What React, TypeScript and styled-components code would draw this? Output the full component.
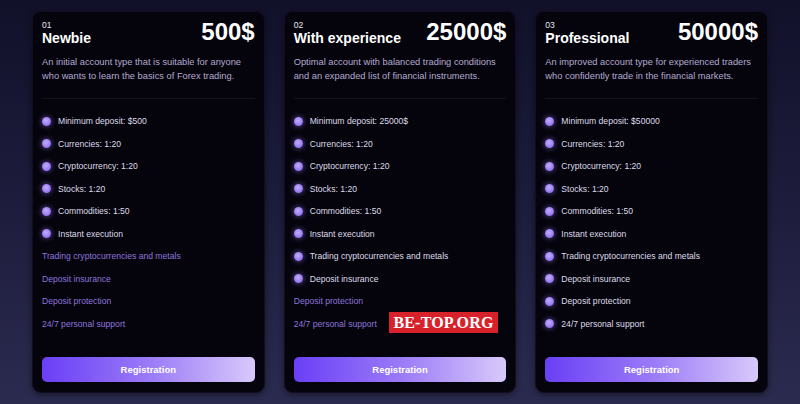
import React from "react";
import styled, { createGlobalStyle } from "styled-components";

const Global = createGlobalStyle`
  html, body { margin: 0; padding: 0; }
  body {
    width: 800px;
    height: 404px;
    overflow: hidden;
    font-family: "Liberation Sans", Arial, sans-serif;
    background: linear-gradient(180deg, #12112a 0%, #1d1c3c 50%, #2b2b50 100%);
  }
`;

const Page = styled.div`
  position: relative;
  width: 800px;
  height: 404px;
  box-sizing: border-box;
  padding: 11px 32px 0;
  display: flex;
  gap: 19px;
`;

const Card = styled.div`
  width: 233px;
  height: 382px;
  box-sizing: border-box;
  padding: 8px 9px 10px;
  background: #05040c;
  border-radius: 9px;
  border: 1px solid #100e20;
  box-shadow: 0 2px 6px rgba(0, 0, 0, 0.45);
  display: flex;
  flex-direction: column;
`;

const Head = styled.div`
  display: flex;
  justify-content: space-between;
  align-items: flex-start;
`;

const Titles = styled.div`
  display: flex;
  flex-direction: column;
`;

const Num = styled.div`
  color: #e8e6ef;
  font-size: 8.5px;
  line-height: 10px;
`;

const Name = styled.div`
  color: #ffffff;
  font-size: 14px;
  font-weight: 700;
  line-height: 17px;
`;

const Price = styled.div`
  color: #ffffff;
  font-size: 24px;
  font-weight: 700;
  line-height: 24px;
`;

const Desc = styled.p`
  margin: 9px 0 0;
  color: #b4aacf;
  font-size: 9.3px;
  line-height: 13.5px;
`;

const Divider = styled.div`
  height: 1px;
  background: #15131f;
  margin-top: 15px;
`;

const List = styled.ul`
  list-style: none;
  margin: 11px 0 0;
  padding: 0;
  display: flex;
  flex-direction: column;
`;

const Item = styled.li<{ $on: boolean }>`
  height: 22.5px;
  display: flex;
  align-items: center;
  gap: 7px;
  font-size: 8.6px;
  color: ${(p) => (p.$on ? "#dedbe8" : "#8f74dc")};
`;

const Dot = styled.span`
  width: 9px;
  height: 9px;
  border-radius: 50%;
  flex: none;
  background: radial-gradient(circle at 45% 40%, #c2b0ff 0%, #9c7ef5 55%, #8665ee 100%);
  box-shadow: 0 0 5px 1px rgba(150, 115, 245, 0.45);
`;

const Button = styled.button`
  margin-top: auto;
  height: 25px;
  width: 100%;
  border: none;
  border-radius: 5px;
  background: linear-gradient(90deg, #6a3ff6 0%, #9a7af7 50%, #d8c9fb 100%);
  color: #ffffff;
  font-family: "Liberation Sans", Arial, sans-serif;
  font-size: 9.5px;
  font-weight: 700;
  cursor: pointer;
`;

const Watermark = styled.div`
  position: absolute;
  left: 389px;
  top: 312px;
  width: 109px;
  height: 21px;
  background: #d8222b;
  color: #ffffff;
  font-family: "Liberation Serif", "Times New Roman", serif;
  font-weight: 700;
  font-size: 16px;
  display: flex;
  align-items: center;
  justify-content: center;
  letter-spacing: 0.2px;
`;

const features = [
  "Trading cryptocurrencies and metals",
  "Deposit insurance",
  "Deposit protection",
  "24/7 personal support",
];

type Plan = {
  num: string;
  name: string;
  price: string;
  desc: string;
  deposit: string;
  active: number;
};

const plans: Plan[] = [
  {
    num: "01",
    name: "Newbie",
    price: "500$",
    desc: "An initial account type that is suitable for anyone who wants to learn the basics of Forex trading.",
    deposit: "Minimum deposit: $500",
    active: 6,
  },
  {
    num: "02",
    name: "With experience",
    price: "25000$",
    desc: "Optimal account with balanced trading conditions and an expanded list of financial instruments.",
    deposit: "Minimum deposit: 25000$",
    active: 8,
  },
  {
    num: "03",
    name: "Professional",
    price: "50000$",
    desc: "An improved account type for experienced traders who confidently trade in the financial markets.",
    deposit: "Minimum deposit: $50000",
    active: 10,
  },
];

export default function App() {
  return (
    <>
      <Global />
      <Page>
        {plans.map((p) => {
          const items = [
            p.deposit,
            "Currencies: 1:20",
            "Cryptocurrency: 1:20",
            "Stocks: 1:20",
            "Commodities: 1:50",
            "Instant execution",
            ...features,
          ];
          return (
            <Card key={p.num}>
              <Head>
                <Titles>
                  <Num>{p.num}</Num>
                  <Name>{p.name}</Name>
                </Titles>
                <Price>{p.price}</Price>
              </Head>
              <Desc>{p.desc}</Desc>
              <Divider />
              <List>
                {items.map((t, i) => {
                  const on = i < p.active;
                  return (
                    <Item key={t} $on={on}>
                      {on && <Dot />}
                      {t}
                    </Item>
                  );
                })}
              </List>
              <Button>Registration</Button>
            </Card>
          );
        })}
        <Watermark>BE-TOP.ORG</Watermark>
      </Page>
    </>
  );
}
